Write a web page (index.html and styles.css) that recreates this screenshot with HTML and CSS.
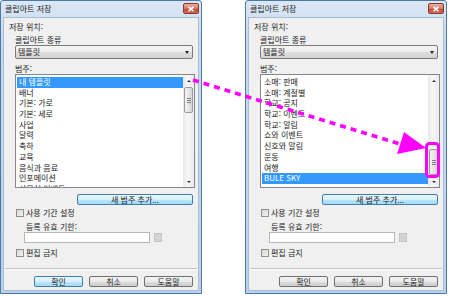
FILE: index.html
```html
<!DOCTYPE html>
<html lang="ko">
<head>
    <meta charset="UTF-8">
    <title>클립아트 저장</title>
    <link rel="stylesheet" href="styles.css">
</head>
<body>
<div class="stage">

    <!-- 왼쪽 창 -->
    <div class="window">
        <div class="titlebar">
            <span class="title">클립아트 저장</span>
            <span class="close"><svg width="8" height="6" viewBox="0 0 8 6"><path d="M1.5 0.8 L6.5 5.2 M6.5 0.8 L1.5 5.2" stroke="#fff" stroke-width="1.6"/></svg></span>
        </div>
        <div class="panel">
            <div class="label">저장 위치:</div>
            <div class="group">
                <div class="label top3">클립아트 종류</div>
                <div class="combo"><span>템플릿</span><i class="caret"></i></div>
                <div class="label top5">범주:</div>
                <div class="listbox">
                    <ul class="items">
                        <li class="sel">내 템플릿</li>
                        <li>배너</li>
                        <li>기본: 가로</li>
                        <li>기본: 세로</li>
                        <li>사업</li>
                        <li>달력</li>
                        <li>축하</li>
                        <li>교육</li>
                        <li>음식과 음료</li>
                        <li>인포메이션</li>
                        <li>사무실 이벤트</li>
                    </ul>
                    <div class="scrollbar">
                        <div class="sb-btn"><i class="up"></i></div>
                        <div class="track"><div class="thumb"><i></i><i></i><i></i></div></div>
                        <div class="sb-btn"><i class="down"></i></div>
                    </div>
                </div>
                <div class="addrow"><button class="btn default">새 범주 추가...</button></div>
                <div class="check top3"><span class="box"></span>사용 기간 설정</div>
                <div class="sub">등록 유효 기한:</div>
                <div class="daterow"><span class="input"></span><span class="minibtn"></span></div>
                <div class="check top5"><span class="box"></span>편집 금지</div>
            </div>
            <div class="sep"></div>
            <div class="actions">
                <button class="btn default">확인</button>
                <button class="btn">취소</button>
                <button class="btn">도움말</button>
            </div>
        </div>
    </div>

    <!-- 오른쪽 창 -->
    <div class="window">
        <div class="titlebar">
            <span class="title">클립아트 저장</span>
            <span class="close"><svg width="8" height="6" viewBox="0 0 8 6"><path d="M1.5 0.8 L6.5 5.2 M6.5 0.8 L1.5 5.2" stroke="#fff" stroke-width="1.6"/></svg></span>
        </div>
        <div class="panel">
            <div class="label">저장 위치:</div>
            <div class="group">
                <div class="label top3">클립아트 종류</div>
                <div class="combo"><span>템플릿</span><i class="caret"></i></div>
                <div class="label top5">범주:</div>
                <div class="listbox">
                    <ul class="items">
                        <li>소매: 판매</li>
                        <li>소매: 계절별</li>
                        <li>학교: 공지</li>
                        <li>학교: 이벤트</li>
                        <li>학교: 알림</li>
                        <li>쇼와 이벤트</li>
                        <li>신호와 알림</li>
                        <li>운동</li>
                        <li>여행</li>
                        <li class="sel">BULE SKY</li>
                    </ul>
                    <div class="scrollbar">
                        <div class="sb-btn"><i class="up"></i></div>
                        <div class="track"><div class="thumb low"><i></i><i></i><i></i></div></div>
                        <div class="sb-btn"><i class="down"></i></div>
                    </div>
                </div>
                <div class="addrow"><button class="btn default">새 범주 추가...</button></div>
                <div class="check top3"><span class="box"></span>사용 기간 설정</div>
                <div class="sub">등록 유효 기한:</div>
                <div class="daterow"><span class="input"></span><span class="minibtn"></span></div>
                <div class="check top5"><span class="box"></span>편집 금지</div>
            </div>
            <div class="sep"></div>
            <div class="actions">
                <button class="btn">확인</button>
                <button class="btn">취소</button>
                <button class="btn">도움말</button>
            </div>
        </div>
    </div>

    <!-- 화살표 표시 -->
    <svg class="overlay" width="450" height="296" viewBox="0 0 450 296">
        <line x1="193" y1="80" x2="400" y2="144" stroke="#f0f" stroke-width="3.5" stroke-dasharray="6 5"/>
        <polygon points="426,148 404,132 397,154" fill="#f0f"/>
        <rect x="426.5" y="143.5" width="12" height="33" rx="3" fill="none" stroke="#f0f" stroke-width="3"/>
    </svg>
</div>
</body>
</html>
```

FILE: styles.css
```css
* {
    box-sizing: border-box;
}
body {
    margin: 0;
    width: 450px;
    height: 296px;
    background: #fff;
    font-family: "Noto Sans CJK KR", "Noto Sans", sans-serif;
    font-size: 8px;
    color: #1b1b1b;
    overflow: hidden;
}
button {
    font: inherit;
    color: inherit;
}
.stage {
    position: relative;
    display: flex;
    gap: 43px;
    width: 450px;
    height: 296px;
}
.window {
    width: 202px;
    height: 294px;
    border: 1px solid #4d78a6;
    border-radius: 3px 3px 0 0;
    background: linear-gradient(#dbe7f5, #c6d9ee 40px, #bcd1ea);
    padding: 0 2px 2px;
    display: flex;
    flex-direction: column;
}
.titlebar {
    height: 16px;
    display: flex;
    align-items: center;
    justify-content: space-between;
    padding: 0 0 0 2px;
}
.title {
    line-height: 10px;
}
.close {
    width: 16px;
    height: 11px;
    margin-top: -1px;
    border: 1px solid #84392c;
    border-radius: 2px;
    background: linear-gradient(#eab0a0, #d97a66 50%, #c5412f 51%, #d46d57);
    display: flex;
    align-items: center;
    justify-content: center;
}
.panel {
    flex: 1;
    background: #f0f0f0;
    border: 1px solid #a9bdd4;
    padding: 4px 3px 0 5px;
    display: flex;
    flex-direction: column;
}
.label {
    line-height: 10px;
    height: 10px;
}
.top3 {
    margin-top: 3px;
}
.top5 {
    margin-top: 5px;
}
.group {
    margin-left: 6px;
}
.combo {
    height: 14px;
    margin-right: 2px;
    border: 1px solid #7a7a7a;
    border-radius: 2px;
    background: linear-gradient(#f4f4f4, #ececec 50%, #dfdfdf 51%, #d3d3d3);
    display: flex;
    align-items: center;
    justify-content: space-between;
    padding: 0 3px 0 2px;
    line-height: 10px;
}
.caret {
    width: 0;
    height: 0;
    border-left: 2.5px solid transparent;
    border-right: 2.5px solid transparent;
    border-top: 3px solid #222;
}
.listbox {
    height: 114px;
    border: 1px solid #828790;
    background: #fff;
    display: flex;
}
.items {
    flex: 1;
    list-style: none;
    margin: 0;
    padding: 2px 0 0 1px;
    overflow: hidden;
}
.items li {
    height: 10.7px;
    line-height: 10.7px;
    padding-left: 2px;
    white-space: nowrap;
}
.items li.sel {
    background: #3399ff;
    color: #fff;
}
.scrollbar {
    width: 11px;
    display: flex;
    flex-direction: column;
    background: linear-gradient(to right, #e8e8e8, #f6f6f6 40%, #ececec);
}
.sb-btn {
    height: 12px;
    display: flex;
    align-items: center;
    justify-content: center;
}
.sb-btn:last-child {
    height: 11px;
}
.up, .down {
    width: 0;
    height: 0;
    border-left: 2px solid transparent;
    border-right: 2px solid transparent;
}
.up {
    border-bottom: 2.5px solid #333;
}
.down {
    border-top: 2.5px solid #333;
}
.track {
    flex: 1;
}
.thumb {
    width: 9px;
    height: 26px;
    margin-left: 1px;
    border: 1px solid #9b9b9b;
    border-radius: 2px;
    background: linear-gradient(to right, #f3f3f3, #e6e6e6 50%, #d6d6d6);
    display: flex;
    flex-direction: column;
    align-items: center;
    justify-content: center;
    gap: 1px;
}
.thumb.low {
    margin-top: 62px;
}
.thumb i {
    width: 4px;
    height: 1px;
    background: #7d7d7d;
}
.addrow {
    margin-top: 6px;
    display: flex;
    justify-content: flex-end;
    margin-right: 2px;
}
.addrow .btn {
    width: 116px;
}
.btn {
    height: 11px;
    padding: 0;
    border: 1px solid #707070;
    border-radius: 2px;
    background: linear-gradient(#f2f2f2, #ebebeb 50%, #dddddd 51%, #cfcfcf);
    line-height: 8px;
    font-size: 8px;
}
.btn.default {
    border-color: #3c7fb1;
    background: linear-gradient(#eaf6fd, #d9f0fc 50%, #bee6fd 51%, #a7d9f5);
}
.check {
    display: flex;
    align-items: center;
    height: 10px;
    line-height: 10px;
    padding-left: 1px;
}
.box {
    width: 8px;
    height: 8px;
    margin-right: 2px;
    border: 1px solid #8e8f8f;
    background: linear-gradient(135deg, #d6d6d6, #f4f4f4);
}
.sub {
    margin-top: 4px;
    margin-left: 11px;
    height: 10px;
    line-height: 10px;
}
.daterow {
    display: flex;
    align-items: center;
    margin-left: 9px;
}
.input {
    width: 126px;
    height: 11px;
    border: 1px solid #b6b6b6;
    background: #fff;
}
.minibtn {
    width: 8px;
    height: 9px;
    margin-left: 4px;
    background: #d4d4d4;
    border: 1px solid #c4c4c4;
}
.sep {
    margin: 10px -2px 0 -4px;
    height: 2px;
    border-top: 1px solid #c2c2c2;
    border-bottom: 1px solid #fff;
}
.actions {
    margin-top: 6px;
    margin-right: 2px;
    display: flex;
    justify-content: flex-end;
    gap: 6px;
}
.actions .btn {
    width: 49px;
}
.overlay {
    position: absolute;
    left: 0;
    top: 0;
}
```
